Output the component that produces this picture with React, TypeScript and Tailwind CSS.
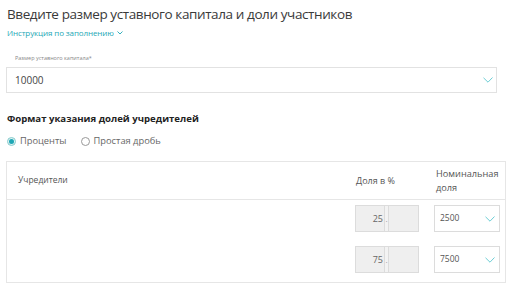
import React from 'react';

const Check: React.FC = () => (
  <svg width="10" height="6" viewBox="0 0 10 6" fill="none" className="shrink-0">
    <path d="M0.5 0.8 L5 5.2 L9.5 0.5" stroke="#5cc8d0" strokeWidth="0.9" />
  </svg>
);

const rows = [
  { pct: '25', nominal: '2500' },
  { pct: '75', nominal: '7500' },
];

export default function App() {
  return (
    <div
      className="w-[512px] h-[298px] bg-white overflow-hidden text-[#333]"
      style={{ fontFamily: '"Open Sans", "Liberation Sans", sans-serif' }}
    >
      <h1 className="pl-[7px] pt-[5px] text-[13.5px] leading-[18px] text-[#3a3a3a] tracking-[-0.4px]">
        Введите размер уставного капитала и доли участников
      </h1>

      <div className="pl-[7px] mt-[4px] flex items-center gap-[3px] text-[#1ea7b5] text-[8px] leading-[12px] tracking-[-0.1px]">
        <span>Инструкция по заполнению</span>
        <svg width="6" height="4" viewBox="0 0 6 4" fill="none">
          <path d="M0.5 0.5 L3 3 L5.5 0.5" stroke="#1ea7b5" strokeWidth="0.9" />
        </svg>
      </div>

      <div className="pl-[15px] mt-[15px] text-[5.5px] leading-[8px] text-[#888]">Размер уставного капитала*</div>

      <div className="ml-[6px] mt-[5px] w-[491px] h-[26px] border border-[#e2e2e2] flex items-center justify-between pl-[8px] pr-[3px]">
        <span className="text-[10px] text-[#444]">10000</span>
        <Check />
      </div>

      <div className="pl-[7px] mt-[19px] text-[9.6px] leading-[14px] font-bold text-[#222]">
        Формат указания долей учредителей
      </div>

      <div className="pl-[7px] mt-[8px] flex items-center text-[9.3px] leading-[14px] text-[#666]">
        <span className="w-[9px] h-[9px] rounded-full border border-[#8cc] bg-[#dff2f4] flex items-center justify-center">
          <span className="w-[5px] h-[5px] rounded-full bg-[#1ea7b5]" />
        </span>
        <span className="ml-[4px]">Проценты</span>
        <span className="ml-[14px] w-[9px] h-[9px] rounded-full border border-[#999]" />
        <span className="ml-[4px]">Простая дробь</span>
      </div>

      <div className="ml-[6px] mt-[13px] w-[500px] border border-[#e6e6e6]">
        <div className="h-[38px] flex items-center border-b border-[#e6e6e6] text-[9px] text-[#555]">
          <div className="flex-1 pl-[11px] text-[8.5px]">Учредители</div>
          <div className="w-[80px]">Доля в %</div>
          <div className="w-[69px] leading-[14px] text-[9.2px]">
            Номинальная
            <br />
            доля
          </div>
        </div>
        <div className="pt-[5px] pb-[9px] flex flex-col gap-[14px]">
          {rows.map((r) => (
            <div key={r.pct} className="flex items-center">
              <div className="flex-1" />
              <div className="w-[64px] h-[27px] flex bg-[#efefef] border border-[#dcdcdc] text-[9px] text-[#666]">
                <div className="w-[28px] flex items-center justify-end pr-[1px]">{r.pct}</div>
                <div className="w-[5px] flex items-center justify-center border-l border-r border-[#dcdcdc] bg-[#f3f3f3] text-[8px] text-[#999]">.</div>
                <div className="flex-1" />
              </div>
              <div className="ml-[15px] mr-[5px] w-[66px] h-[27px] border border-[#dcdcdc] flex items-center justify-between pl-[5px] pr-[4px]">
                <span className="text-[8.5px] text-[#555]">{r.nominal}</span>
                <Check />
              </div>
            </div>
          ))}
        </div>
      </div>
    </div>
  );
}
